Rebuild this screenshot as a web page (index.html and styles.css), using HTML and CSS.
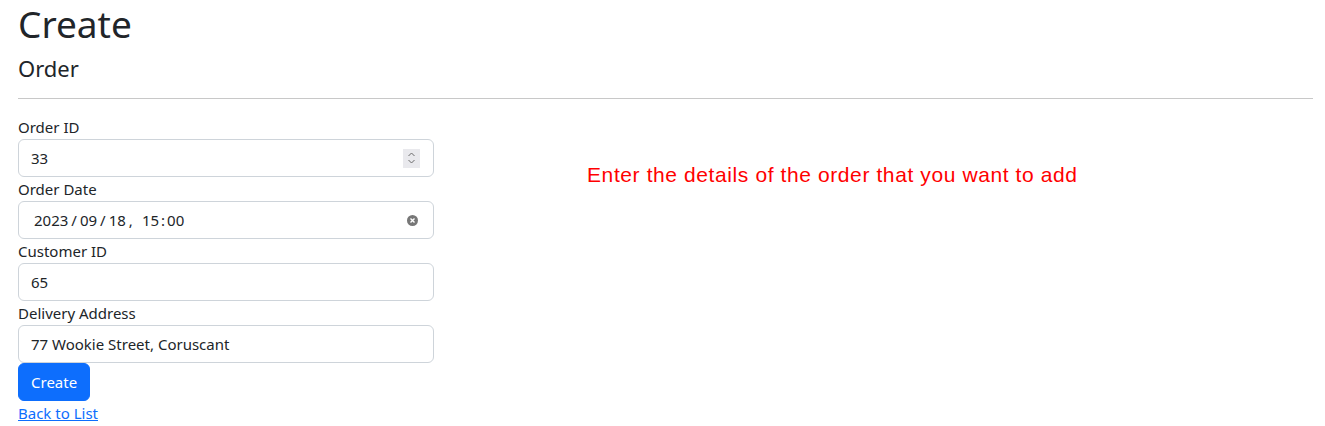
FILE: index.html
```html
<!DOCTYPE html>
<html lang="en">
<head>
<meta charset="utf-8">
<title>Create</title>
<link rel="stylesheet" href="styles.css">
</head>
<body>
<main class="page">
  <h1 class="title">Create</h1>
  <h4 class="subtitle">Order</h4>
  <hr class="rule">
  <div class="row">
    <form class="form-col">
      <div class="group">
        <label class="label">Order ID</label>
        <div class="control">
          <span class="value">33</span>
          <span class="spinner">
            <svg width="9" height="14" viewBox="0 0 9 14"><path d="M1.5 5 L4.5 2 L7.5 5" fill="none" stroke="#6b6b6b" stroke-width="1"/><path d="M1.5 9 L4.5 12 L7.5 9" fill="none" stroke="#6b6b6b" stroke-width="1"/></svg>
          </span>
        </div>
      </div>
      <div class="group">
        <label class="label">Order Date</label>
        <div class="control">
          <span class="value date">2023<span class="sep">/</span>09<span class="sep">/</span>18<span class="comma">,</span>15<span class="colon">:</span>00</span>
          <span class="clear">
            <svg width="11" height="11" viewBox="0 0 11 11"><circle cx="5.5" cy="5.5" r="5.5" fill="#777"/><path d="M3.5 3.5 L7.5 7.5 M7.5 3.5 L3.5 7.5" stroke="#fff" stroke-width="1.4"/></svg>
          </span>
        </div>
      </div>
      <div class="group">
        <label class="label">Customer ID</label>
        <div class="control"><span class="value">65</span></div>
      </div>
      <div class="group">
        <label class="label">Delivery Address</label>
        <div class="control"><span class="value">77 Wookie Street, Coruscant</span></div>
      </div>
      <button type="button" class="btn">Create</button>
      <a class="back" href="#">Back to List</a>
    </form>
    <div class="note-col">
      <p class="note">Enter the details of the order that you want to add</p>
    </div>
  </div>
</main>
</body>
</html>
```
FILE: styles.css
```css
html, body {
  margin: 0;
  padding: 0;
  background: #fff;
}
body {
  font-family: "Noto Sans", "Open Sans", sans-serif;
  font-size: 16px;
  line-height: 24px;
  color: #212529;
}
.page {
  padding: 0 12px 0 18px;
}
.title {
  font-size: 37px;
  line-height: 48px;
  font-weight: 400;
  margin: 0 0 6px;
}
.subtitle {
  font-size: 22px;
  line-height: 28px;
  font-weight: 400;
  margin: 0;
}
.rule {
  border: 0;
  border-top: 1px solid #c8c8c8;
  margin: 16px 0 16px;
}
.row {
  display: flex;
}
.form-col {
  width: 416px;
  display: flex;
  flex-direction: column;
  align-items: flex-start;
}
.group {
  width: 100%;
  display: flex;
  flex-direction: column;
}
.label {
  height: 24px;
  font-size: 15px;
}
.control {
  box-sizing: border-box;
  height: 38px;
  border: 1px solid #ced4da;
  border-radius: 6px;
  padding: 0 12px;
  display: flex;
  align-items: center;
  justify-content: space-between;
  font-size: 15px;
}
.date {
  padding-left: 3px;
}
.sep {
  margin: 0 3px;
}
.comma {
  margin: 0 9px 0 3px;
}
.colon {
  margin: 0 2px;
}
.spinner {
  width: 17px;
  height: 19px;
  background: #e9e9ed;
  display: flex;
  align-items: center;
  justify-content: center;
  margin-right: 1px;
}
.clear {
  display: flex;
  margin-right: 3px;
}
.btn {
  height: 38px;
  padding: 0 12px;
  background: #0d6efd;
  border: 1px solid #0d6efd;
  border-radius: 6px;
  color: #fff;
  font-family: inherit;
  font-size: 15px;
  line-height: 24px;
}
.back {
  color: #0d6efd;
  text-decoration: underline;
  font-size: 15px;
  line-height: 24px;
}
.note-col {
  margin-left: 153px;
  padding-top: 48px;
}
.note {
  margin: 0;
  color: #ff0000;
  font-family: "Liberation Sans", sans-serif;
  font-size: 21px;
  letter-spacing: 0.6px;
  line-height: 24px;
}
```
